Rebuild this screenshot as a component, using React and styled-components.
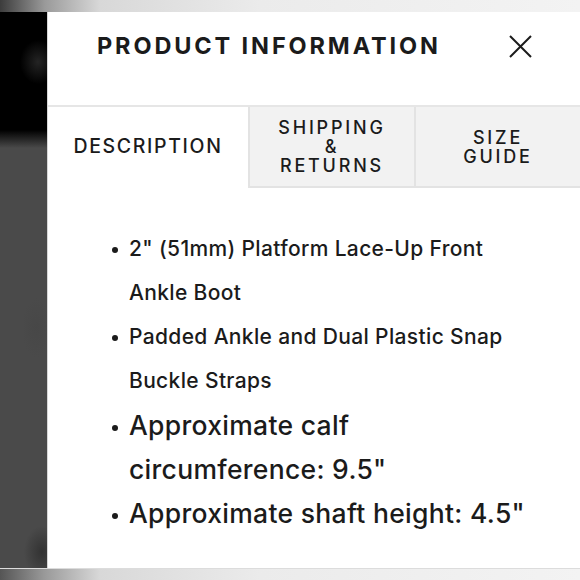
import React from "react";
import styled, { createGlobalStyle } from "styled-components";

const Global = createGlobalStyle`
  html, body { margin: 0; padding: 0; background: #ececec; }
  body { font-family: Inter, "Helvetica Neue", Arial, sans-serif; color: #1b1b1b; }
  * { box-sizing: border-box; }
`;

const Frame = styled.div`
  width: 580px;
  height: 580px;
  display: grid;
  grid-template-rows: 12px 1fr 12px;
  overflow: hidden;
`;

const Strip = styled.div`
  background: linear-gradient(
    to right,
    ${(p) => p.$dark} 0px,
    #9a9a9a 45px,
    #d8d8d8 100px,
    #ebebeb 260px,
    #f3f3f3 100%
  );
  border-top: ${(p) => (p.$bottom ? "1px solid #dcdcdc" : "none")};
`;

const Middle = styled.div`
  display: grid;
  grid-template-columns: 48px 1fr;
  min-height: 0;
`;

const Backdrop = styled.div`
  background:
    radial-gradient(ellipse 18px 22px at 38px 50px, rgba(40, 40, 40, 0.9), rgba(0, 0, 0, 0) 100%),
    radial-gradient(ellipse 14px 30px at 36px 316px, rgba(70, 70, 70, 0.7), rgba(0, 0, 0, 0) 100%),
    radial-gradient(ellipse 18px 26px at 42px 540px, rgba(40, 40, 40, 0.7), rgba(0, 0, 0, 0) 100%),
    linear-gradient(to bottom, #000 0, #000 118px, #4a4a4a 136px, #4a4a4a 100%);
  border-right: 1px solid #d6d6d6;
`;

const Panel = styled.section`
  background: #fff;
  display: flex;
  flex-direction: column;
  min-height: 0;
`;

const Header = styled.header`
  height: 95px;
  padding: 18px 48px 0 49px;
  display: flex;
  align-items: flex-start;
  border-bottom: 2px solid #e6e6e6;
`;

const HeaderRow = styled.div`
  display: flex;
  align-items: center;
  justify-content: space-between;
  width: 100%;
  height: 32px;
`;

const Title = styled.h2`
  margin: 0;
  font-size: 23.5px;
  font-weight: 700;
  letter-spacing: 2.88px;
  line-height: 1;
  color: #1b1b1b;
`;

const CloseButton = styled.button`
  border: 0;
  background: transparent;
  padding: 0;
  width: 23px;
  height: 24px;
  display: flex;
  align-items: center;
  justify-content: center;
  cursor: pointer;
`;

const Tabs = styled.div`
  display: grid;
  grid-template-columns: 200px 166px 1fr;
  height: 81px;
`;

const Tab = styled.div`
  display: flex;
  align-items: center;
  justify-content: center;
  text-align: center;
  background: ${(p) => (p.$active ? "#fff" : "#f2f2f2")};
  border-left: ${(p) => (p.$active ? "none" : "2px solid #e3e3e3")};
  border-bottom: ${(p) => (p.$active ? "2px solid transparent" : "2px solid #e3e3e3")};
  font-size: ${(p) => (p.$active ? "19.5px" : "18px")};
  font-weight: 500;
  letter-spacing: ${(p) => (p.$active ? "1.65px" : "2.8px")};
  line-height: 19px;
  color: #1b1b1b;
`;

const Body = styled.div`
  padding: 39px 0 0 64px;
`;

const List = styled.ul`
  list-style: none;
  margin: 0;
  padding: 0;
  width: 423px;
`;

const Item = styled.li`
  display: grid;
  grid-template-columns: 17px 1fr;
  font-size: ${(p) => (p.$large ? "26.5px" : "21px")};
  line-height: 44px;
  font-weight: 500;
  color: #1b1b1b;
  letter-spacing: ${(p) => (p.$large ? "0.3px" : "0.35px")};
`;

const Bullet = styled.span`
  height: 44px;
  display: flex;
  align-items: center;
  padding-top: ${(p) => (p.$large ? "6px" : "2px")};
  &::before {
    content: "";
    width: 6px;
    height: 6px;
    border-radius: 50%;
    background: #1b1b1b;
  }
`;

const items = [
  { text: '2" (51mm) Platform Lace-Up Front Ankle Boot' },
  { text: "Padded Ankle and Dual Plastic Snap Buckle Straps" },
  { text: 'Approximate calf circumference: 9.5"', large: true },
  { text: 'Approximate shaft height: 4.5"', large: true },
];

export default function App() {
  return (
    <>
      <Global />
      <Frame>
        <Strip $dark="#3c3c3c" />
        <Middle>
          <Backdrop />
          <Panel>
            <Header>
              <HeaderRow>
                <Title>PRODUCT INFORMATION</Title>
                <CloseButton aria-label="Close">
                  <svg width="23" height="23" viewBox="0 0 23 23">
                    <path d="M1 1 L22 22 M22 1 L1 22" stroke="#1b1b1b" strokeWidth="2" fill="none" />
                  </svg>
                </CloseButton>
              </HeaderRow>
            </Header>
            <Tabs>
              <Tab $active>DESCRIPTION</Tab>
              <Tab>
                SHIPPING
                <br />
                &amp;
                <br />
                RETURNS
              </Tab>
              <Tab>
                SIZE
                <br />
                GUIDE
              </Tab>
            </Tabs>
            <Body>
              <List>
                {items.map((it) => (
                  <Item key={it.text} $large={it.large}>
                    <Bullet $large={it.large} />
                    <span>{it.text}</span>
                  </Item>
                ))}
              </List>
            </Body>
          </Panel>
        </Middle>
        <Strip $dark="#555555" $bottom />
      </Frame>
    </>
  );
}
